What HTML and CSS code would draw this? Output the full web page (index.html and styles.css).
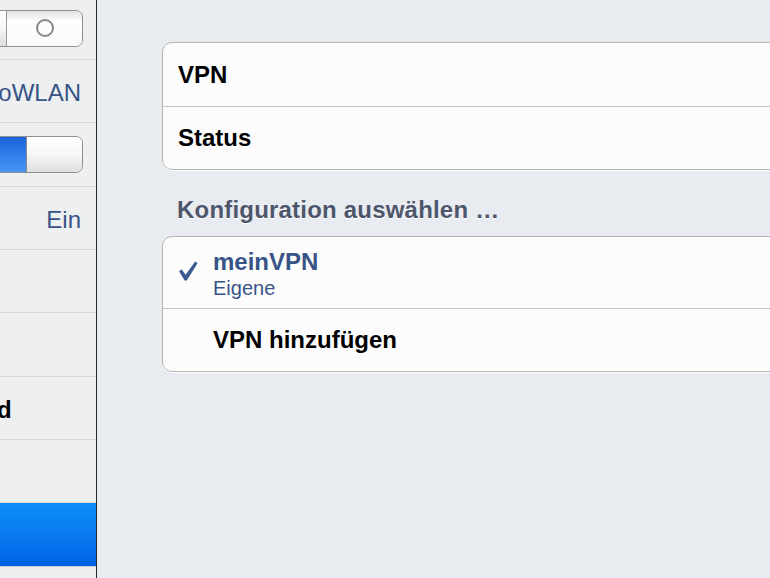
FILE: index.html
```html
<!DOCTYPE html>
<html lang="de">
<head>
<meta charset="utf-8">
<title>VPN</title>
<link rel="stylesheet" href="styles.css">
</head>
<body>
<div class="app">
  <aside class="sidebar">
    <ul class="menu">
      <li class="row"><span class="label">Flugmodus</span>
        <span class="switch off"><span class="knob"></span><span class="track"><span class="ring"></span></span></span>
      </li>
      <li class="row"><span class="label">WLAN</span><span class="value">HalloWLAN</span></li>
      <li class="row"><span class="label">VPN</span>
        <span class="switch on"><span class="track"></span><span class="knob"></span></span>
      </li>
      <li class="row"><span class="label">Benachrichtigungen</span><span class="value">Ein</span></li>
      <li class="row"><span class="label">Netzbetreiber</span></li>
      <li class="row"><span class="label">Mobile Daten</span></li>
      <li class="row"><span class="label">Helligkeit &amp; Hintergrund</span></li>
      <li class="row"><span class="label">Bilderrahmen</span></li>
      <li class="row selected"><span class="label">Allgemein</span></li>
      <li class="row"><span class="label">Mail, Kontakte, Kalender</span></li>
    </ul>
  </aside>
  <main class="main">
    <div class="group">
      <div class="cell">VPN</div>
      <div class="cell">Status</div>
    </div>
    <h2 class="section-title">Konfiguration auswählen …</h2>
    <div class="group">
      <div class="cell option">
        <svg class="check" width="20" height="20" viewBox="0 0 20 20" aria-hidden="true">
          <path d="M1 10.2 L3.8 8.6 L7.6 13.8 L17.2 0.6 L19.6 2.2 L8.8 19.4 L6.6 19.4 Z" fill="#3a5a8f"/>
        </svg>
        <div class="option-text">
          <div class="option-name">meinVPN</div>
          <div class="option-type">Eigene</div>
        </div>
      </div>
      <div class="cell add">VPN hinzufügen</div>
    </div>
  </main>
</div>
</body>
</html>
```
FILE: styles.css
```css
* {
  box-sizing: border-box;
  margin: 0;
  padding: 0;
}

html, body {
  width: 770px;
  height: 578px;
  overflow: hidden;
}

body {
  font-family: "Liberation Sans", Arial, sans-serif;
  background: #e8ebf0;
}

.app {
  display: flex;
  height: 578px;
}

/* ---------- sidebar ---------- */
.sidebar {
  width: 97px;
  flex: none;
  overflow: hidden;
  background: #eeeff1;
  border-right: 1px solid #262626;
}

.menu {
  list-style: none;
  width: 380px;
  margin: -3px 0 0 -284px;
}

.row {
  height: 63px;
  display: flex;
  align-items: center;
  justify-content: space-between;
  padding: 0 13px 0 21px;
  border-bottom: 1px solid #d7d9dc;
  font-size: 24px;
  line-height: 28px;
}

.row:nth-child(3n) {
  height: 64px;
}

.label,
.value {
  padding-top: 4px;
}

.label {
  font-weight: bold;
  color: #000;
  white-space: nowrap;
}

.value {
  color: #385487;
  margin-right: 2px;
  white-space: nowrap;
}

.row.selected {
  background: linear-gradient(#0d8cf6, #0a7ff2 40%, #0061e6);
  border-bottom-color: #c9ccd0;
}

.row.selected .label {
  color: #fff;
}

/* switches */
.switch {
  display: flex;
  flex: none;
  width: 129px;
  height: 37px;
  border: 1px solid #8f8f8f;
  border-radius: 7px;
  overflow: hidden;
}

.knob {
  background: linear-gradient(#ffffff, #f6f6f6 50%, #dedede);
}

.switch.off .knob {
  width: 52px;
  border-right: 1px solid #9a9a9a;
}

.switch.off .track {
  flex: 1;
  display: flex;
  align-items: center;
  justify-content: center;
  background: linear-gradient(#e2e2e2, #fdfdfd 30%, #fafafa);
}

.ring {
  width: 18px;
  height: 18px;
  border: 2.5px solid #878787;
  border-radius: 50%;
}

.switch.on .track {
  width: 71px;
  background: linear-gradient(#1b63d6, #2b7bea 45%, #4a93f2);
}

.switch.on .knob {
  flex: 1;
  border-left: 1px solid #8a8a8a;
}

/* ---------- main ---------- */
.main {
  flex: 1;
  min-width: 0;
  overflow: hidden;
  padding: 42px 0 0 65px;
  background: #e8ebf0;
}

.group {
  width: 700px;
  background: #fcfcfc;
  border: 1px solid #b4b4b4;
  border-radius: 10px;
  box-shadow: 0 1px 0 #ffffff;
}

.cell {
  height: 63px;
  display: flex;
  align-items: center;
  padding-left: 15px;
  font-size: 24px;
  line-height: 28px;
  font-weight: bold;
  color: #000;
}

.cell + .cell {
  border-top: 1px solid #c6c6c6;
}

.section-title {
  padding: 26px 15px 12px;
  font-size: 24px;
  line-height: 28px;
  font-weight: bold;
  letter-spacing: 0.2px;
  color: #4d566b;
  text-shadow: 0 1px 0 #ffffff;
}

.cell.option {
  height: 71px;
  align-items: flex-start;
  padding-top: 12px;
}

.check {
  flex: none;
  margin-top: 12px;
}

.option-text {
  margin-left: 15px;
  color: #385487;
}

.option-name {
  font-size: 24px;
  line-height: 26px;
  font-weight: bold;
}

.option-type {
  font-size: 20px;
  line-height: 26px;
  font-weight: normal;
}

.cell.add {
  padding-left: 50px;
}
```
